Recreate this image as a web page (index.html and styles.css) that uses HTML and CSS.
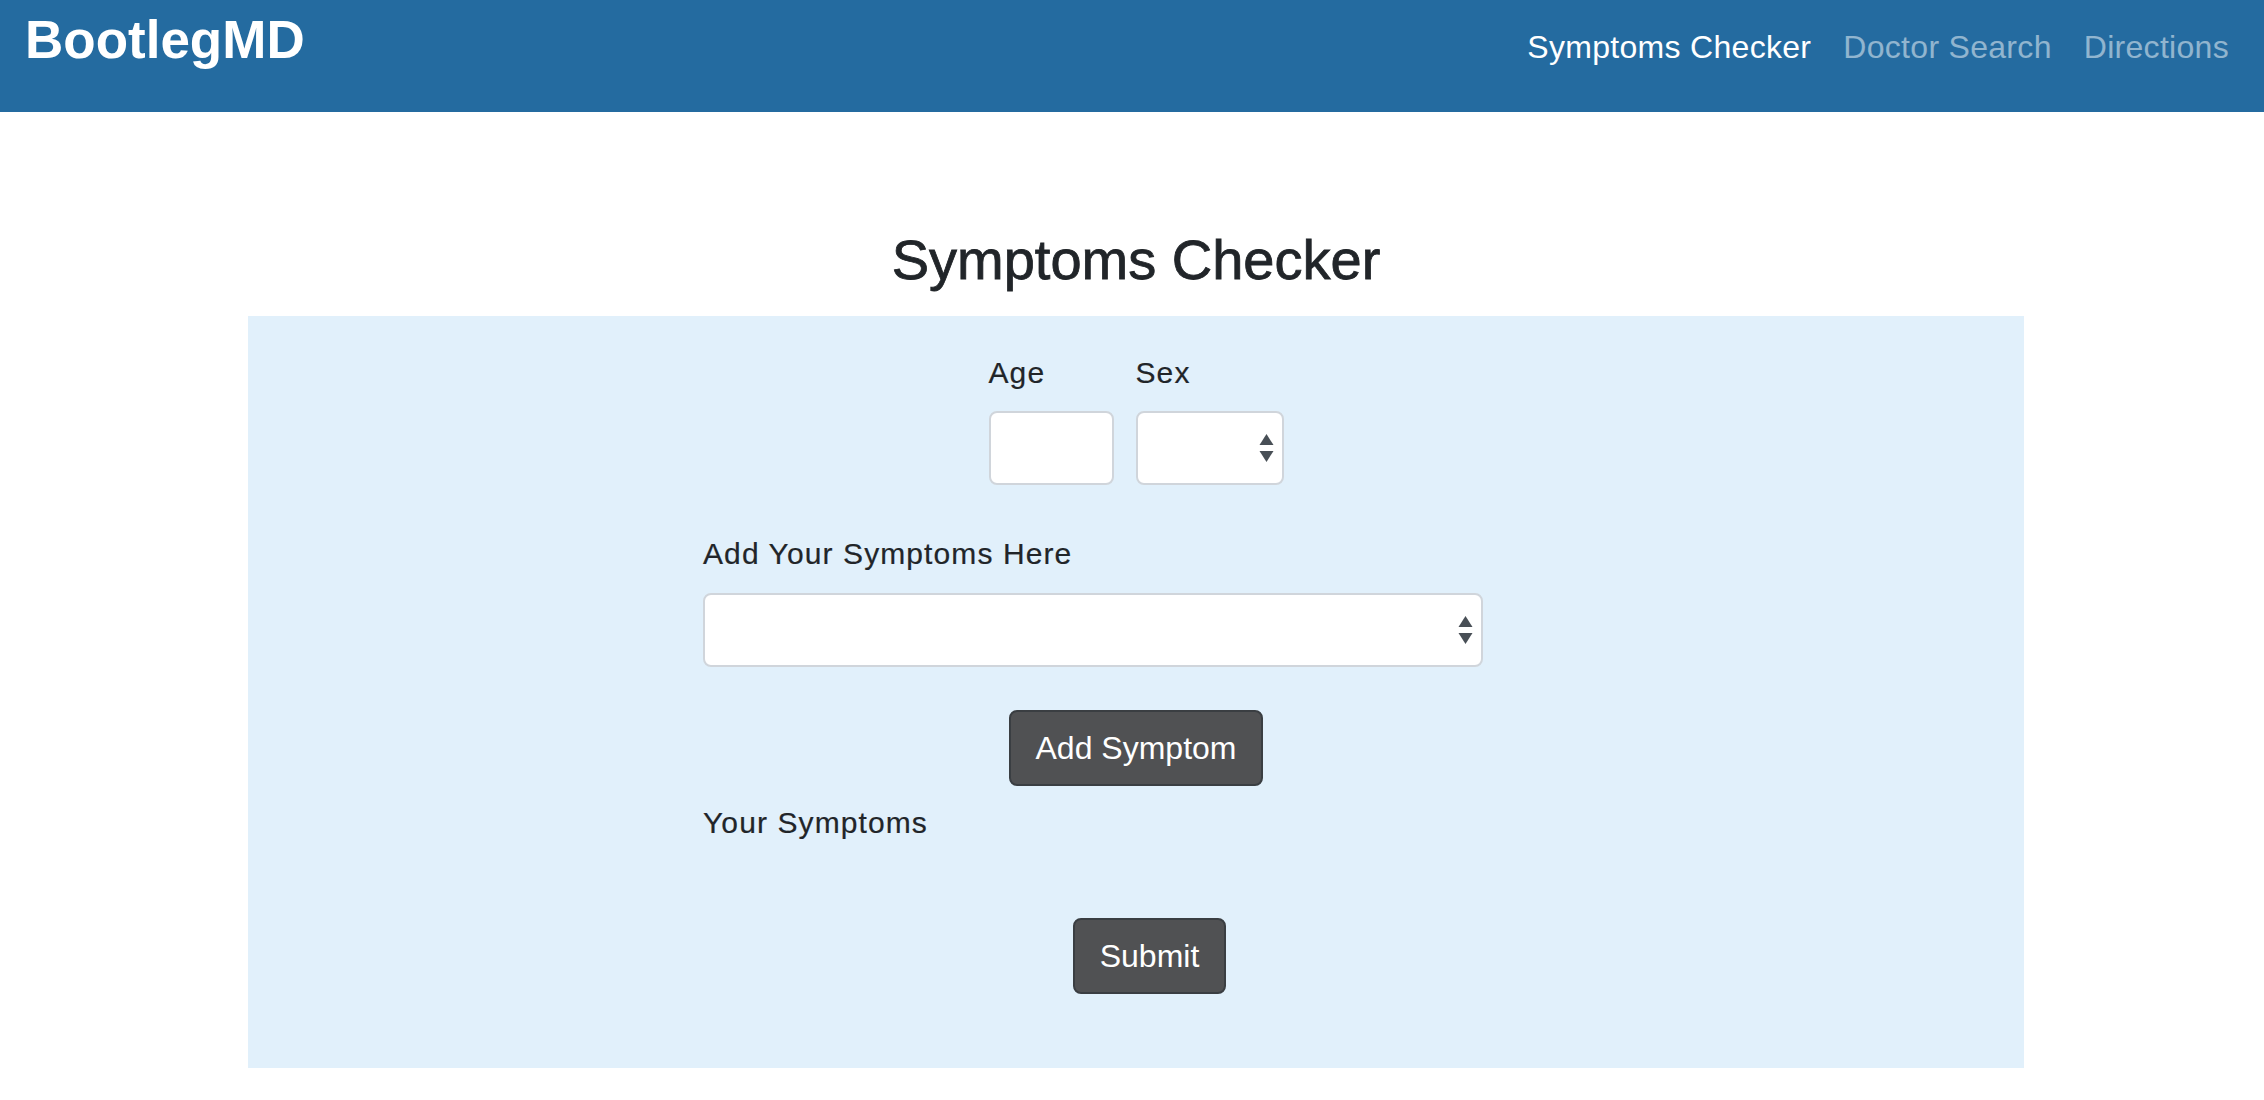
FILE: index.html
```html
<!DOCTYPE html>
<html lang="en">
<head>
<meta charset="utf-8">
<title>BootlegMD - Symptoms Checker</title>
<link rel="stylesheet" href="styles.css">
</head>
<body>
<nav class="navbar">
  <a class="brand" href="#">BootlegMD</a>
  <ul class="nav">
    <li><a class="nav-link active" href="#">Symptoms Checker</a></li>
    <li><a class="nav-link" href="#">Doctor Search</a></li>
    <li><a class="nav-link" href="#">Directions</a></li>
  </ul>
</nav>
<main class="main">
  <h1 class="title">Symptoms Checker</h1>
  <section class="panel">
    <div class="demo-row">
      <div class="field age">
        <label class="label">Age</label>
        <input class="control" type="text">
      </div>
      <div class="field sex">
        <label class="label">Sex</label>
        <div class="control select">
          <svg class="arrows" width="15" height="28" viewBox="0 0 15 28"><path d="M7.5 0 L14.5 11 L0.5 11 Z" fill="#484f56"/><path d="M0.5 17 L14.5 17 L7.5 28 Z" fill="#484f56"/></svg>
        </div>
      </div>
    </div>
    <div class="symptoms">
      <label class="label">Add Your Symptoms Here</label>
      <div class="control select wide">
        <svg class="arrows" width="15" height="28" viewBox="0 0 15 28"><path d="M7.5 0 L14.5 11 L0.5 11 Z" fill="#484f56"/><path d="M0.5 17 L14.5 17 L7.5 28 Z" fill="#484f56"/></svg>
      </div>
    </div>
    <div class="btn-row">
      <button class="btn" type="button">Add Symptom</button>
    </div>
    <div class="symptoms">
      <p class="label your">Your Symptoms</p>
    </div>
    <div class="btn-row submit-row">
      <button class="btn" type="submit">Submit</button>
    </div>
  </section>
</main>
</body>
</html>
```
FILE: styles.css
```css
* { box-sizing: border-box; }

body {
  margin: 0;
  font-family: "Liberation Sans", Arial, sans-serif;
  color: #212529;
  background: #ffffff;
}

.navbar {
  height: 112px;
  background: #246ba0;
  display: flex;
  align-items: flex-start;
  justify-content: space-between;
  padding: 8px 35px 0 25px;
}

.brand {
  font-size: 53px;
  line-height: 64px;
  font-weight: 700;
  color: #ffffff;
  text-decoration: none;
}

.nav {
  list-style: none;
  margin: 15px 0 0 0;
  padding: 0;
  display: flex;
}

.nav-link {
  display: block;
  padding: 0 16px;
  font-size: 32px;
  line-height: 48px;
  letter-spacing: 0.3px;
  color: rgba(255, 255, 255, 0.5);
  text-decoration: none;
}

.nav li:last-child .nav-link { padding-right: 0; }

.nav-link.active { color: #ffffff; }

.main {
  width: 1776px;
  margin-left: 248px;
}

.title {
  margin: 114px 0 23px 0;
  text-align: center;
  font-size: 56px;
  line-height: 67px;
  font-weight: 400;
  -webkit-text-stroke: 0.8px #212529;
}

.panel {
  background: #e1f0fb;
  padding: 34px 0 74px 0;
  display: flex;
  flex-direction: column;
}

.demo-row {
  display: flex;
  justify-content: center;
  gap: 22px;
}

.field {
  display: flex;
  flex-direction: column;
}

.label {
  display: block;
  margin: 0;
  font-size: 30px;
  line-height: 45px;
  letter-spacing: 1.1px;
  -webkit-text-stroke: 0.2px #212529;
}

.control {
  margin-top: 16px;
  height: 74px;
  background: #ffffff;
  border: 2px solid #d0d5db;
  border-radius: 8px;
  font: inherit;
  padding: 0 12px;
}

.age .control { width: 125px; }
.sex .control { width: 148px; }

.select {
  display: flex;
  align-items: center;
  justify-content: flex-end;
  padding-right: 8px;
}

.symptoms {
  margin-left: 455px;
  width: 780px;
  margin-top: 46px;
}

.symptoms .control { margin-top: 17px; }

.btn-row {
  display: flex;
  justify-content: center;
  margin-top: 43px;
}

.btn {
  font-family: inherit;
  font-size: 32px;
  line-height: 48px;
  padding: 12px 25px;
  color: #ffffff;
  background: #505153;
  border: 2px solid #3a3e42;
  border-radius: 8px;
}

.symptoms .your { margin: 0; }
.btn-row + .symptoms { margin-top: 14px; }

.submit-row {
  margin-top: 73px;
  padding-left: 27px;
}
```
